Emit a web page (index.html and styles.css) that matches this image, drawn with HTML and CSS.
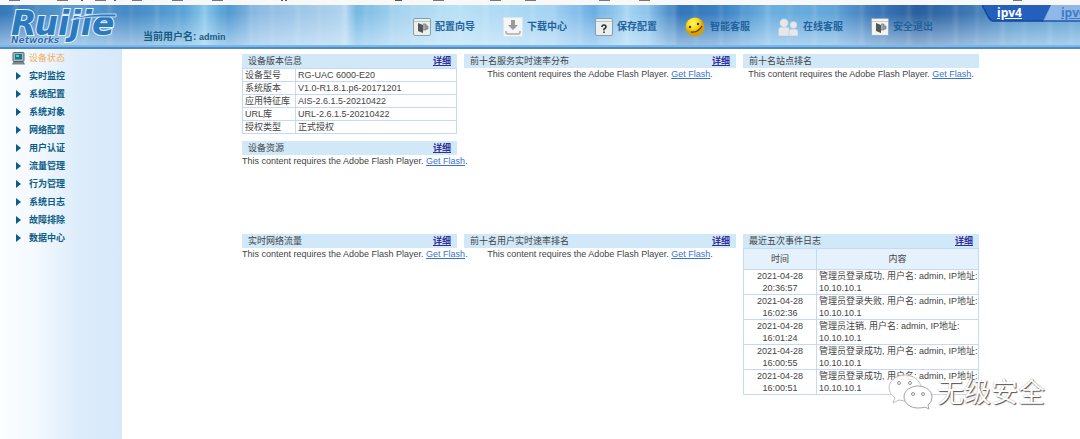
FILE: index.html
```html
<!DOCTYPE html>
<html lang="zh-CN">
<head>
<meta charset="utf-8">
<title>Ruijie Networks</title>
<link rel="stylesheet" href="styles.css">
</head>
<body>
<svg class="browser-edge" viewBox="0 0 1080 5" preserveAspectRatio="xMinYMin slice" aria-hidden="true">
  <path d="M9 0h11M57 0h11M95 0h11M132 0h10M172 0h11M212 0h11M433 0h11M490 0h11M525 0h11M599 0h11M639 0h11M1013 0h9" stroke="#777" stroke-width="2"/>
  <path d="M81 0h2M114 0h2M281 0h2M285 0h2M395 0h7" stroke="#555" stroke-width="2"/>
</svg>
<header class="top">
  <div class="logo">
    <span class="brand">Ruijie</span>
    <span class="sub">Networks</span>
    <svg class="swoosh" viewBox="0 0 46 8" aria-hidden="true"><path d="M0 7Q14 0 45 1V4Q17 3 0 7Z" fill="#2b79bf" stroke="#e6f1fb" stroke-width=".8"/></svg>
  </div>
  <div class="user">当前用户名: <b>admin</b></div>
  <nav class="tools">
    <a href="#"><svg class="icon" viewBox="0 0 18 18"><rect x=".5" y=".5" width="17" height="17" rx="1.5" fill="#e9eeee" stroke="#8b9da5"/><path d="M1 3.5h16" stroke="#b6c3c8"/><path d="M5 5l5 2v8l-5-2z" fill="#555"/><path d="M10 6h3v6h-3M12 8h3v3h-3" fill="#aaa" stroke="#777" stroke-width=".7"/></svg>配置向导</a>
    <a href="#"><svg class="icon mid" viewBox="0 0 20 20"><rect x=".5" y=".5" width="19" height="19" fill="#f4f5f6" stroke="#dce5ea"/><path d="M8 3h4v5h3l-5 5-5-5h3z" fill="#999"/><path d="M3 14v1q0 2 2 2h10q2 0 2-2v-1" fill="none" stroke="#aaa" stroke-width="1.5"/></svg>下载中心</a>
    <a href="#"><svg class="icon" viewBox="0 0 18 18"><rect x=".5" y=".5" width="17" height="17" rx="1.5" fill="#e9eeee" stroke="#8b9da5"/><path d="M1 3.5h16" stroke="#b6c3c8"/><path d="M7 9q0-2 2-2t2 2q0 1-2 2v1.500M9 13.500v1.500" fill="none" stroke="#333" stroke-width="1.6"/></svg>保存配置</a>
    <a href="#"><svg class="icon wide" viewBox="0 0 21 21"><defs><radialGradient id="face" cx=".4" cy=".3"><stop offset="0" stop-color="#fff86a"/><stop offset=".6" stop-color="#fbdc16"/><stop offset="1" stop-color="#d89e0a"/></radialGradient></defs><circle cx="10" cy="10" r="9.500" fill="url(#face)"/><circle cx="5" cy="10" r="1.200" fill="#413500"/><circle cx="13" cy="7" r="1.200" fill="#413500"/><path d="M6 15q7 1 11-6" fill="none" stroke="#5b4300" stroke-width="1.300"/></svg>智能客服</a>
    <a href="#"><svg class="icon wide" viewBox="0 0 21 19"><g fill="#e4e8ec" stroke="#b9c3cd" stroke-width=".5"><path d="M.5 18v-6q0-3 3-3h5q3 0 3 3v6z"/><circle cx="6" cy="5" r="4.200"/><path d="M11 18v-4q0-3 3-3h3q3 0 3 3v4z"/><circle cx="15.500" cy="7" r="3.600"/></g></svg>在线客服</a>
    <a href="#"><svg class="icon" viewBox="0 0 18 18"><rect x=".5" y=".5" width="17" height="17" rx="1" fill="#f0f4f6" stroke="#9aa9b3"/><path d="M1 3.500h16" stroke="#c2ced4"/><path d="M5 5l5 2v8l-5-2z" fill="#555"/><path d="M10 6h3v6h-3M12 8h3v3h-3" fill="#aaa" stroke="#777" stroke-width=".7"/></svg>安全退出</a>
  </nav>
  <div class="tabs">
    <svg class="tabs-bg" viewBox="0 0 98 18" aria-hidden="true"><path d="M62 16L69 0H98V16Z" fill="#8fb7e8"/><path d="M60 16H98" stroke="#2456a8" stroke-width="1.500"/><path d="M0 0H69L61 16H12Q9 16 7 13Z" fill="#2460bb"/><path d="M0 0L7 13Q9 16 12 16H61" fill="none" stroke="#14469b" stroke-width="1.500"/></svg>
    <a class="tab on" href="#">ipv4</a>
    <a class="tab" href="#">ipv6</a>
  </div>
</header>
<div class="page">
  <aside class="side">
    <a class="current" href="#"><svg viewBox="0 0 13 13" aria-hidden="true"><rect x="1" y=".5" width="11" height="9" rx="1" fill="#a9b8bd" stroke="#526971"/><rect x="3" y="2" width="7" height="5.500" fill="#16778a"/><path d="M4 3h3v2H4z" fill="#67c9c6"/><path d="M1 10h11l1 2.500H0z" fill="#7b878c"/></svg>设备状态</a>
    <a href="#">实时监控</a>
    <a href="#">系统配置</a>
    <a href="#">系统对象</a>
    <a href="#">网络配置</a>
    <a href="#">用户认证</a>
    <a href="#">流量管理</a>
    <a href="#">行为管理</a>
    <a href="#">系统日志</a>
    <a href="#">故障排除</a>
    <a href="#">数据中心</a>
  </aside>
  <main class="board">
    <div class="stack">
      <section>
        <h2>设备版本信息<a href="#">详细</a></h2>
        <table class="info">
          <tr><th>设备型号</th><td>RG-UAC 6000-E20</td></tr>
          <tr><th>系统版本</th><td>V1.0-R1.8.1.p6-20171201</td></tr>
          <tr><th>应用特征库</th><td>AIS-2.6.1.5-20210422</td></tr>
          <tr><th>URL库</th><td>URL-2.6.1.5-20210422</td></tr>
          <tr><th>授权类型</th><td>正式授权</td></tr>
        </table>
      </section>
      <section>
        <h2>设备资源<a href="#">详细</a></h2>
        <p>This content requires the Adobe Flash Player. <a href="#">Get Flash</a>.</p>
      </section>
    </div>
    <section>
      <h2>前十名服务实时速率分布<a href="#">详细</a></h2>
      <p>This content requires the Adobe Flash Player. <a href="#">Get Flash</a>.</p>
    </section>
    <section>
      <h2>前十名站点排名</h2>
      <p>This content requires the Adobe Flash Player. <a href="#">Get Flash</a>.</p>
    </section>
    <section>
      <h2>实时网络流量<a href="#">详细</a></h2>
      <p>This content requires the Adobe Flash Player. <a href="#">Get Flash</a>.</p>
    </section>
    <section>
      <h2>前十名用户实时速率排名<a href="#">详细</a></h2>
      <p>This content requires the Adobe Flash Player. <a href="#">Get Flash</a>.</p>
    </section>
    <section>
      <h2>最近五次事件日志<a href="#">详细</a></h2>
      <table class="log">
        <tr><th>时间</th><th>内容</th></tr>
        <tr><td>2021-04-28<br>20:36:57</td><td>管理员登录成功, 用户名: admin, IP地址:<br>10.10.10.1</td></tr>
        <tr><td>2021-04-28<br>16:02:36</td><td>管理员登录失败, 用户名: admin, IP地址:<br>10.10.10.1</td></tr>
        <tr><td>2021-04-28<br>16:01:24</td><td>管理员注销, 用户名: admin, IP地址:<br>10.10.10.1</td></tr>
        <tr><td>2021-04-28<br>16:00:55</td><td>管理员登录成功, 用户名: admin, IP地址:<br>10.10.10.1</td></tr>
        <tr><td>2021-04-28<br>16:00:51</td><td>管理员登录成功, 用户名: admin, IP地址:<br>10.10.10.1</td></tr>
      </table>
    </section>
  </main>
</div>
<div class="mark">
  <svg viewBox="0 0 46 38" aria-hidden="true"><g fill="#fff" stroke="#999" stroke-width="1"><path d="M17 3C8 3 1 9 1 16q0 6 6 10l-2 5 6-3q12 3 19-3 4-4 3-10C32 8 25 3 17 3Z" stroke="#bbb"/><path d="M30 14c-8 0-14 5-14 11s6 11 14 11q4 0 7-1l4 2-1-4q4-3 4-8c0-6-6-11-14-11Z"/></g><g fill="#fff" stroke="#888"><circle cx="11" cy="11" r="1.500"/><circle cx="22" cy="11" r="1.500"/><circle cx="25" cy="22" r="1.500"/><circle cx="35" cy="22" r="1.500"/></g></svg>
  <span>无级安全</span>
</div>
</body>
</html>
```
FILE: styles.css
```css
* { box-sizing: border-box; }
body {
  margin: 0;
  min-height: 100vh;
  display: flex;
  flex-direction: column;
  overflow-x: hidden;
  background: #fff;
  color: #444;
  font: 9px/12px "Liberation Sans", "Noto Sans CJK SC", sans-serif;
}
.browser-edge { display: block; width: 100%; height: 5px; background: #f8f8f8; }

.top {
  display: grid;
  grid-template-columns: 143px 270px 1fr auto;
  height: 44px;
  overflow: hidden;
  border-bottom: 2px solid #5089c5;
  box-shadow: inset 0 -2px #79b9e8;
  background:
    linear-gradient(180deg, transparent 20%, rgba(225, 241, 253, .6)),
    repeating-linear-gradient(90deg, transparent 0 11px, rgba(255, 255, 255, .1) 16px, transparent 20px 33px, rgba(255, 255, 255, .07) 37px, transparent 42px 47px),
    linear-gradient(90deg, #3579b9 0, #5c9cd1 7%, #4589c5 12%, #5ba3d6 17%, #86c6ea 19%, #4f98d1 21%, #8fbce3 24%, #abd0ec 31%, #b4d7ef 32%, #76b9e2 33%, #a6d3ef 37%, #b9e1f6 42%, #a5d3f2 51%, #6caee5 55%, #a6d5f2 58%, #8cc3ea 60%, #3376b9 63%, #3d82c5 67%, #6cb0df 71%, #63a6da 77%, #3b78b8 81%, #285f9f 85%, #3b73b0 89%, #5698cc 94%, #62a4d5 100%);
}
.logo { position: relative; padding: 7px 0 0 11px; }
.brand {
  display: block;
  color: #2b79bf;
  font: italic bold 33px/24px "DejaVu Sans", sans-serif;
  -webkit-text-stroke: 2px #e6f1fb;
  paint-order: stroke fill;
}
.sub {
  display: block;
  color: #2e6daf;
  font: italic bold 9px/8px "DejaVu Sans", sans-serif;
  text-shadow: 0 0 1px #fff, 0 0 2px #fff;
}
.swoosh { position: absolute; left: 71px; top: 8px; width: 46px; height: 8px; }
.user { align-self: end; padding-bottom: 4px; color: #175b82; font-size: 10px; font-weight: bold; line-height: 12px; }
.user b { font-size: 9px; }
.tools { display: flex; align-items: center; gap: 28px; padding-top: 2px; }
.tools a {
  display: flex;
  align-items: center;
  gap: 4px;
  color: #22639c;
  font-size: 10px;
  font-weight: bold;
  text-decoration: none;
  white-space: nowrap;
}
.icon { width: 18px; height: 18px; }
.icon.mid { width: 20px; height: 20px; }
.icon.wide { width: 21px; height: 21px; }
.tabs { position: relative; display: flex; gap: 39px; width: 98px; padding-left: 15px; }
.tabs-bg { position: absolute; left: 0; top: 0; width: 98px; height: 18px; }
.tab { position: relative; color: #3d7cc5; font: bold 12px/16px "Open Sans", sans-serif; }
.tab.on { color: #fff; }

.page { flex: 1; display: flex; }
.side {
  flex: none;
  width: 122px;
  background: linear-gradient(90deg, #fbfdff 0, #f5faff 25%, #deedfb 62%, #d6e8fa 100%);
}
.side a {
  display: flex;
  align-items: center;
  height: 18px;
  padding-left: 16px;
  color: #0d5d85;
  font-weight: bold;
  text-decoration: none;
}
.side a::before {
  content: "";
  margin-right: 8px;
  border: solid transparent;
  border-width: 4px 0 4px 5px;
  border-left-color: #0d5d85;
}
.side .current { padding-left: 12px; color: #f5ae5a; font-weight: normal; }
.side .current::before { display: none; }
.side svg { width: 13px; height: 13px; margin-right: 4px; }

.board {
  flex: 1;
  display: grid;
  grid-template-columns: minmax(0, 215fr) minmax(0, 272fr) minmax(0, 236fr);
  grid-template-rows: 173px auto;
  align-content: start;
  gap: 7px;
  padding: 5px 101px 0 120px;
}
.stack { display: flex; flex-direction: column; gap: 7px; }
h2 {
  display: flex;
  justify-content: space-between;
  margin: 0;
  padding: 0 6px;
  background: #d0e8f8;
  color: #444;
  font-size: 9px;
  font-weight: normal;
  line-height: 14px;
}
h2 a { color: #30309a; font-weight: bold; }
p { margin: 0; line-height: 12px; text-align: center; white-space: nowrap; }
p a { color: #3b72d0; }
table { width: 100%; border-collapse: collapse; table-layout: fixed; }
th, td { border: 1px solid #c5d9f7; font-weight: normal; }
.info th, .info td { height: 13px; padding: 0 2px; line-height: 12px; text-align: left; }
.info th { width: 53px; }
.log th { width: 73px; height: 21px; padding: 0; background: #e5f1fb; }
.log th + th { width: auto; }
.log td { padding: 0 2px; text-align: center; white-space: nowrap; }
.log td + td { text-align: left; }

.mark { position: absolute; right: 35px; bottom: 29px; display: flex; align-items: center; gap: 3px; }
.mark svg { width: 46px; height: 38px; opacity: .9; }
.mark span {
  color: #fff;
  font: 27px/38px "Noto Sans CJK SC", sans-serif;
  text-shadow: 1px 1px 1px #555, 0 0 1px #999;
}
```
